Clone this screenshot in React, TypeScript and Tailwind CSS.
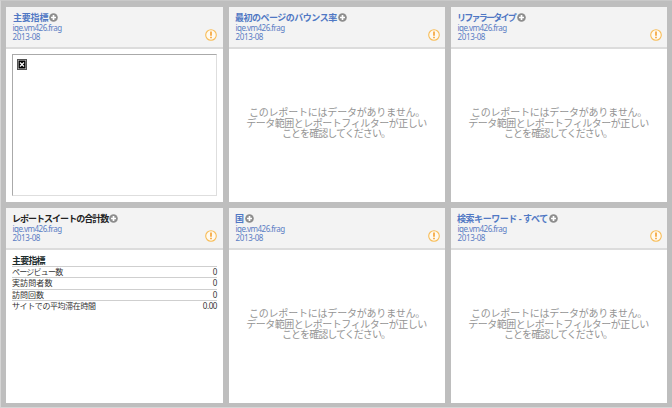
import React from 'react';

const Plus = () => (
  <svg viewBox="0 0 9 9" className="h-[9px] w-[9px] shrink-0">
    <circle cx="4.5" cy="4.5" r="4.3" fill="#8d8d8d" />
    <path d="M4.5 2v5M2 4.5h5" stroke="#fff" strokeWidth="1.7" />
  </svg>
);

const Warning = () => (
  <svg viewBox="0 0 12 12" className="mb-[6px] h-[12px] w-[12px] shrink-0 self-end">
    <circle cx="6" cy="6" r="5.3" fill="#fffaf0" stroke="#f8bd58" strokeWidth="1.1" />
    <path d="M6 2.6v4.2M6 7.8v1.4" stroke="#f4a030" strokeWidth="1.6" />
  </svg>
);

type CardProps = {
  title: string;
  titleClass: string;
  end?: string;
  children?: React.ReactNode;
};

function Card({ title, titleClass, end = 'pr-[6px]', children }: CardProps) {
  return (
    <section className="flex min-w-0 flex-col overflow-hidden bg-white">
      <header className={`flex h-[42px] shrink-0 justify-between border-b-2 border-[#dcdcdc] bg-[#f3f3f3] pl-[6px] ${end}`}>
        <div className="whitespace-nowrap pt-[5px]">
          <div className="flex h-[11px] items-center">
            <h2 className={`leading-[11px] font-bold ${titleClass}`}>{title}</h2>
            <Plus />
          </div>
          <div className="h-[9px] pl-[0.5px] text-[8px] leading-[9px] tracking-[-0.52px] text-[#5a7dc4]">iqe.vm426.frag</div>
          <div className="h-[9px] pl-[0.5px] text-[8px] leading-[9px] tracking-[-0.35px] text-[#5a7dc4]">2013-08</div>
        </div>
        <Warning />
      </header>
      {children}
    </section>
  );
}

const Empty = () => (
  <div className="flex flex-col items-center whitespace-nowrap pt-[58px] text-[10px] leading-[10.7px] text-[#949494]">
    <p className="tracking-[-0.2px]">このレポートにはデータがありません。</p>
    <p className="mr-[1px] tracking-[-0.5px]">データ範囲とレポートフィルターが正しい</p>
    <p className="mr-[2px] tracking-[-0.95px]">ことを確認してください。</p>
  </div>
);

const metrics = [
  { label: 'ページビュー数', value: '0', spacing: 'tracking-[-0.75px]' },
  { label: '実訪問者数', value: '0', spacing: 'tracking-[0.1px]' },
  { label: '訪問回数', value: '0', spacing: 'tracking-[0px]' },
  { label: 'サイトでの平均滞在時間', value: '0.00', spacing: 'tracking-[-0.4px]' },
];

const BrokenImage = () => (
  <svg viewBox="0 0 10 11" className="h-[11px] w-[10px]">
    <rect width="10" height="11" fill="#555" />
    <rect x="1" y="1" width="8" height="9" fill="#ddd" />
    <rect x="1.5" y="1.5" width="7" height="8" fill="#000" />
    <path d="M3 3.5l4 4M7 3.5l-4 4" stroke="#fff" strokeWidth="1.2" />
  </svg>
);

export default function App() {
  return (
    <main className="h-[408px] w-[672px] border-b border-l border-[#d5d5d5] border-t border-t-[#c9c9c9] bg-[#bebebe] pt-[6px] pl-[5px] font-['Noto_Sans','Noto_Sans_CJK_JP',sans-serif]">
      <div className="grid grid-cols-[217px_216px_216px] grid-rows-[195px_195px] gap-[6px]">
        <Card title="主要指標" titleClass="text-[9px] tracking-[-0.2px] ml-[1px] mr-[1px] text-[#5078c4]">
          <div className="mt-[5px] ml-[6px] h-[142px] w-[205px] border border-[#dedede] border-t-[#aaa] border-l-[#aaa] pt-[4px] pl-[4px]">
            <BrokenImage />
          </div>
        </Card>
        <Card title="最初のページのバウンス率" titleClass="text-[9px] tracking-[-0.5px] mr-[1px] text-[#5078c4]" end="pr-[5px]">
          <Empty />
        </Card>
        <Card title="リファラータイプ" titleClass="text-[9px] tracking-[-1.75px] mr-[2px] text-[#5078c4]" end="pr-[5px]">
          <Empty />
        </Card>
        <Card title="レポートスイートの合計数" titleClass="text-[9px] tracking-[-0.98px] mr-[1px] text-[#222]">
          <div className="pt-[5px] pr-[6px] pl-[6px] text-[#333]">
            <h3 className="h-[11px] text-[9px] leading-[11px] font-bold tracking-[-0.8px] text-[#1b2b2b]">主要指標</h3>
            {metrics.map((m) => (
              <div key={m.label} className="flex h-[11.3px] justify-between border-t border-[#cfcfcf] text-[8px] leading-[9px]">
                <span className={m.spacing}>{m.label}</span>
                <span className="tracking-[-0.4px]">{m.value}</span>
              </div>
            ))}
          </div>
        </Card>
        <Card title="国" titleClass="text-[9px] mr-[1px] text-[#5078c4]" end="pr-[5px]">
          <Empty />
        </Card>
        <Card title="検索キーワード - すべて" titleClass="text-[9px] tracking-[-0.45px] mr-[1px] text-[#5078c4]" end="pr-[5px]">
          <Empty />
        </Card>
      </div>
    </main>
  );
}
